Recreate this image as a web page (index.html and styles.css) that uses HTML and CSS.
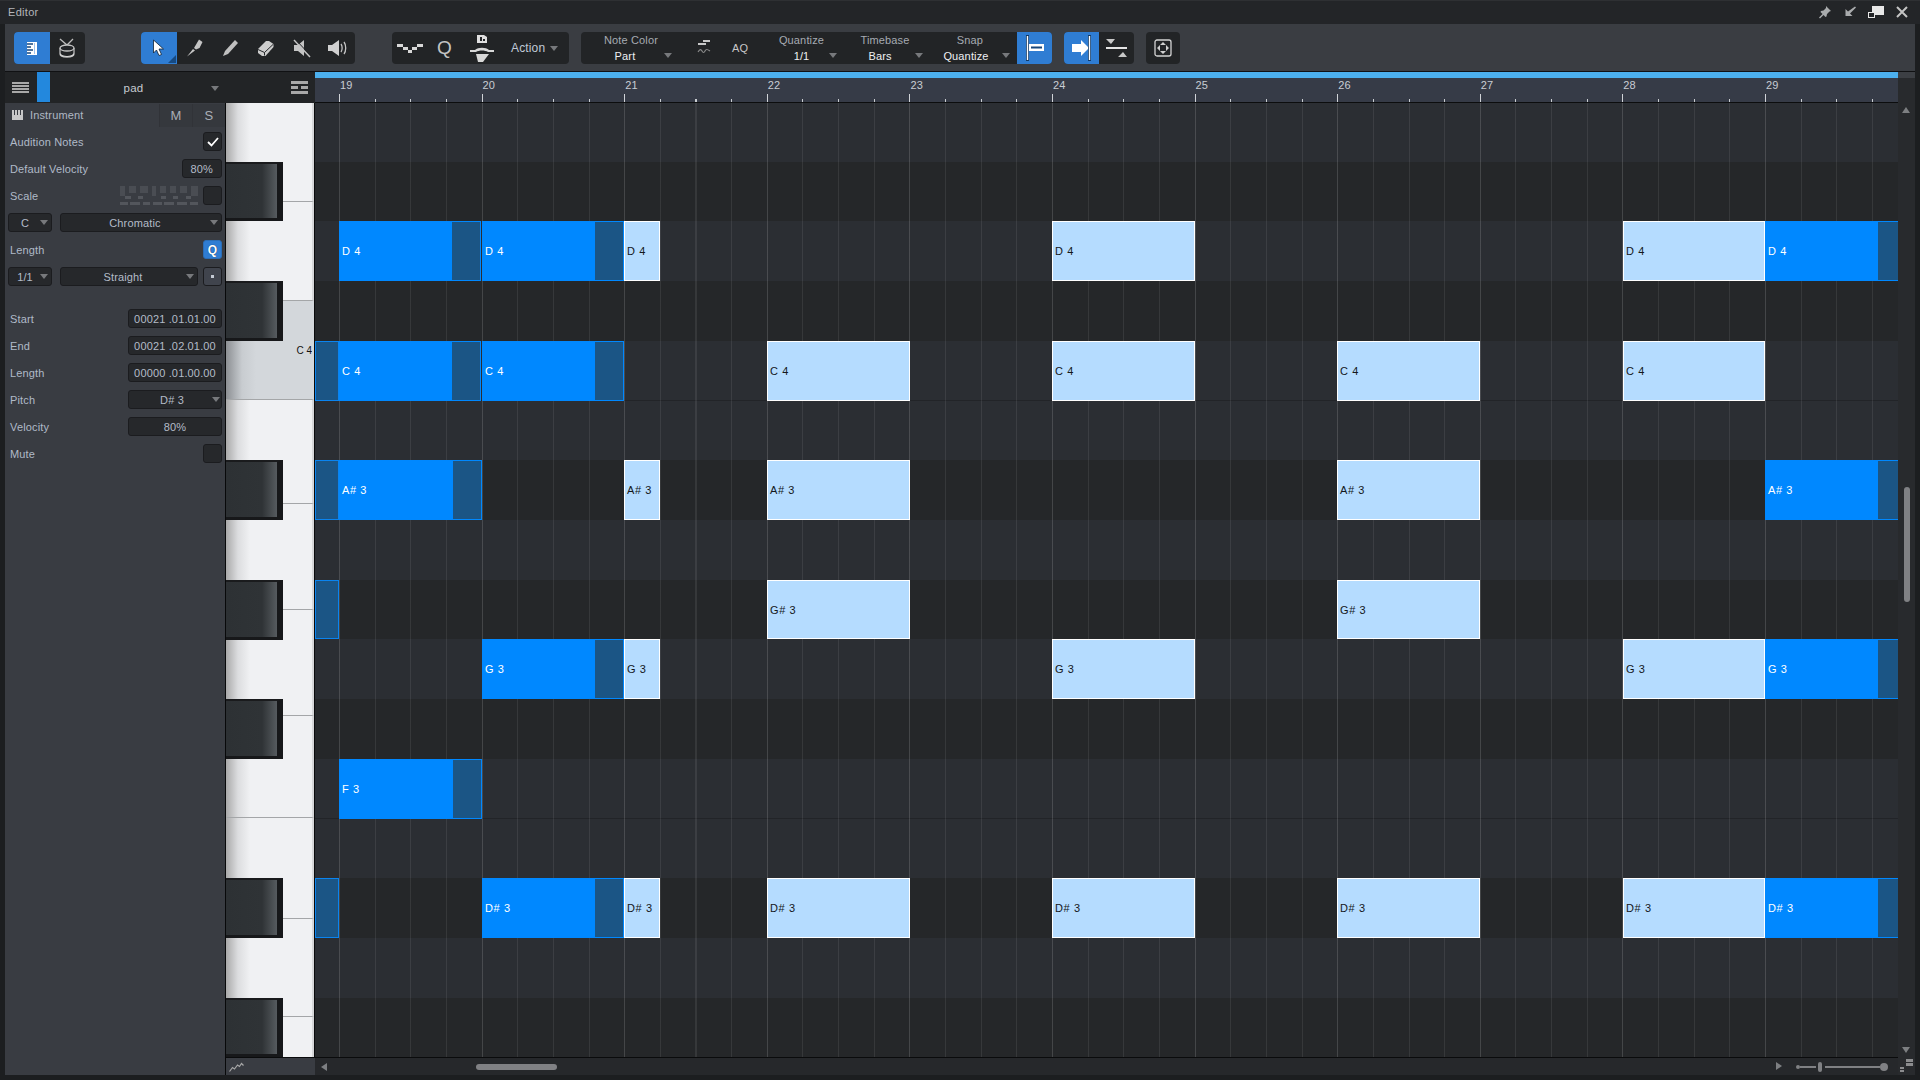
FILE: index.html
```html
<!DOCTYPE html>
<html lang="en">
<head>
<meta charset="utf-8">
<title>Editor</title>
<link rel="stylesheet" href="styles.css">
</head>
<body>
<div class="app">
  <header class="titlebar">
    <span class="title">Editor</span>
    <div class="winbtns">
      <svg class="wi" width="14" height="14" viewBox="0 0 14 14"><path d="M8 1l5 5-1.500.5-2.500 2.500-.5 2.500-1 .5-2-2-3.500 3.500-1-1 3.500-3.500-2-2 .5-1 2.500-.5 2.500-2.500z" fill="#a9abad"/></svg>
      <svg class="wi" width="14" height="14" viewBox="0 0 14 14"><path d="M12 1.500l1 1-6 6 2.500 2.500H2.500V4l2.500 2.500z" fill="#a9abad"/></svg>
      <svg class="wi" width="16" height="14" viewBox="0 0 16 14"><rect x="4" y="1" width="12" height="9" fill="#e8e8e8"/><rect x=".5" y="7.500" width="6" height="5" fill="#232528" stroke="#e8e8e8"/></svg>
      <svg class="wi" width="14" height="14" viewBox="0 0 14 14"><path d="M2 2l10 10M12 2L2 12" stroke="#c4c4c4" stroke-width="2"/></svg>
    </div>
  </header>

  <nav class="toolbar">
    <div class="group g1">
      <button class="tb on"><svg width="10" height="13" viewBox="0 0 10 13"><rect x="0" y="0" width="10" height="13" fill="#fff"/><path d="M0 2h6M0 5h4M0 8h6M0 11h4" stroke="#17477c" stroke-width="1.300"/><path d="M7.500 1v11" stroke="#9fc4ee"/></svg></button>
      <button class="tb"><svg width="18" height="20" viewBox="0 0 18 20"><path d="M2 1l7 6 6-6" fill="none" stroke="#bdbdbd" stroke-width="1.300"/><ellipse cx="9" cy="10" rx="7" ry="3" fill="#232528" stroke="#c4c4c4" stroke-width="1.300"/><path d="M2 10v6c0 2 3 3 7 3s7-1 7-3v-6" fill="none" stroke="#bdbdbd" stroke-width="1.300"/><path d="M2 15c1 2 4 3 7 3s6-1 7-3v2c-1 1-4 2-7 2s-6-1-7-2z" fill="#d8d8d8"/></svg></button>
    </div>
    <div class="group g2">
      <button class="tb on tb-corner"><svg width="14" height="18" viewBox="0 0 14 18"><path d="M1.500 1v13l3-3 2.500 5.500 2.500-1-2.500-5.500h4.500z" fill="#fff" stroke="#123" stroke-width=".8"/></svg></button>
      <button class="tb"><svg width="17" height="18" viewBox="0 0 17 18"><path d="M13 .5l3.500 2.500-3 6-3.500 1.500-2-1.500zM7 10l2 1.500L1 17.500z" fill="#c4c4c4"/></svg></button>
      <button class="tb"><svg width="17" height="18" viewBox="0 0 17 18"><path d="M13 1l3 3-10 11-5 2 2-5z" fill="#c0c0c0"/></svg></button>
      <button class="tb"><svg width="17" height="17" viewBox="0 0 17 17"><path d="M1 9l8-8h3l4.500 3v3l-8 9H5l-4-3z" fill="#cdcdcd"/><path d="M1 9.500l6.500 3 9-8.500M7.500 12.500v3" stroke="#232528" fill="none"/></svg></button>
      <button class="tb"><svg width="18" height="19" viewBox="0 0 18 19"><path d="M1 6h4l6-5v16l-6-5H1z" fill="#c4c4c4"/><path d="M1 1l16 17" stroke="#c4c4c4" stroke-width="1.500"/><path d="M2.500 .5l16 17" stroke="#232528"/></svg></button>
      <button class="tb"><svg width="20" height="18" viewBox="0 0 20 18"><path d="M1 6h4l7-5v16l-7-5H1z" fill="#d0d0d0"/><path d="M14 5c1.500 2 1.500 6 0 8M17 3c2.300 3 2.300 9 0 12" fill="none" stroke="#c4c4c4" stroke-width="1.300"/></svg></button>
    </div>
    <div class="group g3">
      <button class="tb w36"><svg width="26" height="9" viewBox="0 0 26 9"><path d="M0 0h6v3H0zM6 3h5v3H6zM11 6h4v3h-4zM15 3h5v3h-5zM20 0h6v3h-6z" fill="#d8d8d8"/></svg></button>
      <button class="tb w35 q">Q</button>
      <button class="tb w38"><svg width="24" height="27" viewBox="0 0 24 27"><path d="M7 0h7l3 2v6H7z" fill="#e0e0e0"/><path d="M10 2h2v4h-2zM13 4h2v2h-2z" fill="#232528"/><path d="M0 15h5c3-3 11-3 14 0h5v2h-6c-3-2-9-2-12 0H0z" fill="#d8d8d8"/><path d="M6 19h13l-6 8H8z" fill="#d8d8d8"/></svg></button>
      <div class="action"><span>Action</span><i class="tri"></i></div>
    </div>
    <div class="group g4">
      <div class="combo c-color"><span class="lb">Note Color</span><span class="val">Part</span><i class="tri"></i></div>
      <button class="tb w36 ml5"><svg width="14" height="16" viewBox="0 0 14 16"><path d="M6 0h7v2H6zM1 3h8v2H1z" fill="#c8c8c8"/><path d="M1 12c2-3 3-3 4-1s2 2 3 0 2-2 5 0" fill="none" stroke="#8a8a8a" stroke-width="1.200"/></svg></button>
      <button class="tb w36 aq">AQ</button>
      <div class="combo c-quant"><span class="lb">Quantize</span><span class="val">1/1</span><i class="tri"></i></div>
      <div class="combo c-base"><span class="lb">Timebase</span><span class="val">Bars</span><i class="tri"></i></div>
      <div class="combo c-snap"><span class="lb">Snap</span><span class="val">Quantize</span><i class="tri"></i></div>
      <button class="tb on"><svg width="19" height="26" viewBox="0 0 19 26"><rect x="1" y="0" width="3" height="26" fill="#123a66"/><rect x="1.800" y="1" width="1.400" height="24" fill="#fff"/><rect x="4" y="9" width="15" height="7" fill="#fff"/><rect x="6" y="11.500" width="11" height="2" fill="#17477c"/></svg></button>
    </div>
    <div class="group g5">
      <button class="tb on"><svg width="20" height="26" viewBox="0 0 20 26"><path d="M0 9h9V5l8 8-8 8v-4H0z" fill="#fff"/><rect x="16" y="0" width="3" height="26" fill="#123a66"/><rect x="16.800" y="1" width="1.400" height="24" fill="#fff"/></svg></button>
      <button class="tb"><svg width="22" height="24" viewBox="0 0 22 24"><path d="M0 3h9L5 8zM12 21h9l-4-5z" fill="#c8c8c8"/><rect y="11" width="21" height="2" fill="#e4e4e4"/></svg></button>
    </div>
    <div class="group g6">
      <button class="tb"><svg width="18" height="18" viewBox="0 0 18 18"><rect x="1" y="1" width="16" height="16" rx="2" fill="none" stroke="#d4d4d4" stroke-width="1.300"/><path d="M9 3l3 3H6zM9 15l3-3H6zM3 9l3-3v6zM15 9l-3-3v6z" fill="#d0d0d0"/><circle cx="9" cy="9" r="2" fill="#232528"/></svg></button>
    </div>
  </nav>

  <main class="editor">
    <div class="strip">
      <svg class="strip-ic" width="17" height="12" viewBox="0 0 17 12"><path d="M0 1h17M0 4h17M0 7h17M0 10h17" stroke="#a8a8a8" stroke-width="1.800"/></svg>
      <span class="swatch"></span>
      <div class="trackname"><span>pad</span><i class="tri"></i></div>
      <svg class="strip-ic" width="17" height="13" viewBox="0 0 17 13"><path d="M0 0h17v3H0zM0 5h7v3H0zM10 5h7v3h-7zM0 10h17v3H0z" fill="#a8a8a8"/></svg>
    </div>

    <div class="ruler">
      <div class="loopband"></div>
      <div class="bars">
        <span>19</span><span>20</span><span>21</span><span>22</span><span>23</span><span>24</span><span>25</span><span>26</span><span>27</span><span>28</span><span>29</span>
      </div>
      <div class="ticks"></div>
    </div>

    <aside class="vscroll">
      <div class="vs-top"></div>
      <i class="arrow-up"></i>
      <span class="vthumb"></span>
      <i class="arrow-down"></i>
      <svg class="corner" width="14" height="14" viewBox="0 0 14 14"><path d="M6 0h7v3H6zM6 4h7v3H6zM0 8h4v2H0zM0 11h4v2H0z" fill="#8b8c8e"/></svg>
    </aside>

    <section class="panel">
      <div class="inst">
        <svg width="11" height="10" viewBox="0 0 11 10"><path d="M0 0h2v5h1V0h2v5h1V0h2v5h1V0h2v10H0z" fill="#c8c8c8"/></svg>
        <span class="inst-name">Instrument</span>
        <span class="ms">M</span><span class="ms">S</span>
      </div>
      <div class="prow"><label>Audition Notes</label><span class="box sq"><svg width="12" height="10" viewBox="0 0 12 10"><path d="M1 5l3.500 3.500L11 1" fill="none" stroke="#fff" stroke-width="1.800"/></svg></span></div>
      <div class="prow"><label>Default Velocity</label><span class="box w40">80%</span></div>
      <div class="prow"><label>Scale</label>
        <svg class="scale" width="78" height="19" viewBox="0 0 78 19"><path d="M0 0h5v10H0zM9 0h7v7H9zM20 0h8v7h-8zM32 0h4v10h-4zM40 0h6v7h-6zM50 0h6v7h-6zM60 0h7v7h-7zM71 0h7v10h-7z" fill="#4a4d53"/><path d="M0 16h8v3H0zM10 16h10v3H10zM23 16h7v3h-7zM33 16h9v3h-9zM44 16h10v3H44zM57 16h10v3H57zM70 16h8v3h-8z" fill="#53565c"/><path d="M5 10h6v3H5zM18 10h5v3h-5zM41 10h5v3h-5zM53 10h5v3h-5zM66 10h5v3h-5z" fill="#53565c"/></svg>
        <span class="box sq"></span></div>
      <div class="prow tight"><span class="box dd w44 t-c"><b>C</b><i class="tri"></i></span><span class="box dd grow"><b>Chromatic</b><i class="tri"></i></span></div>
      <div class="prow"><label>Length</label><span class="box sq blue"><span class="qs">Q</span></span></div>
      <div class="prow tight"><span class="box dd w44 t-c"><b>1/1</b><i class="tri"></i></span><span class="box dd grow"><b>Straight</b><i class="tri"></i></span><span class="box sq soft"><span class="dot"></span></span></div>
      <div class="prow sep"><label>Start</label><span class="box w94">00021 .01.01.00</span></div>
      <div class="prow"><label>End</label><span class="box w94">00021 .02.01.00</span></div>
      <div class="prow"><label>Length</label><span class="box w94">00000 .01.00.00</span></div>
      <div class="prow"><label>Pitch</label><span class="box dd w94"><b>D# 3</b><i class="tri"></i></span></div>
      <div class="prow"><label>Velocity</label><span class="box w94">80%</span></div>
      <div class="prow"><label>Mute</label><span class="box sq"></span></div>
    </section>

    <div class="keys">
      <div class="wk"></div>
      <div class="wk"></div>
      <div class="wk sel"><span>C 4</span></div>
      <div class="wk"></div>
      <div class="wk"></div>
      <div class="wk"></div>
      <div class="wk"></div>
      <div class="wk"></div>
      <div class="wk"></div>
      <div class="wk last"></div>
      <div class="bk bk1"></div><div class="bk bk2"></div><div class="bk bk3"></div><div class="bk bk4"></div><div class="bk bk5"></div><div class="bk bk6"></div><div class="bk bk7"></div>
    </div>

    <div class="roll">
      <div class="lane"></div>
      <div class="lane dark"></div>
      <div class="lane">
        <div class="note blue" style="left:24px;width:142px"><span>D 4</span><i></i></div>
        <div class="note blue" style="left:167px;width:142px"><span>D 4</span><i></i></div>
        <div class="note light" style="left:309px;width:36px"><span>D 4</span></div>
        <div class="note light" style="left:737px;width:143px"><span>D 4</span></div>
        <div class="note light" style="left:1308px;width:142px"><span>D 4</span></div>
        <div class="note blue cut" style="left:1450px;width:135px"><span>D 4</span><i></i></div>
      </div>
      <div class="lane dark"></div>
      <div class="lane rule">
        <div class="note stub" style="left:0;width:24px"></div>
        <div class="note blue" style="left:24px;width:142px"><span>C 4</span><i></i></div>
        <div class="note blue" style="left:167px;width:142px"><span>C 4</span><i></i></div>
        <div class="note light" style="left:452px;width:143px"><span>C 4</span></div>
        <div class="note light" style="left:737px;width:143px"><span>C 4</span></div>
        <div class="note light" style="left:1022px;width:143px"><span>C 4</span></div>
        <div class="note light" style="left:1308px;width:142px"><span>C 4</span></div>
      </div>
      <div class="lane"></div>
      <div class="lane dark">
        <div class="note stub" style="left:0;width:24px"></div>
        <div class="note blue" style="left:24px;width:143px"><span>A# 3</span><i></i></div>
        <div class="note light" style="left:309px;width:36px"><span>A# 3</span></div>
        <div class="note light" style="left:452px;width:143px"><span>A# 3</span></div>
        <div class="note light" style="left:1022px;width:143px"><span>A# 3</span></div>
        <div class="note blue cut" style="left:1450px;width:135px"><span>A# 3</span><i></i></div>
      </div>
      <div class="lane"></div>
      <div class="lane dark">
        <div class="note stub" style="left:0;width:24px"></div>
        <div class="note light" style="left:452px;width:143px"><span>G# 3</span></div>
        <div class="note light" style="left:1022px;width:143px"><span>G# 3</span></div>
      </div>
      <div class="lane">
        <div class="note blue" style="left:167px;width:142px"><span>G 3</span><i></i></div>
        <div class="note light" style="left:309px;width:36px"><span>G 3</span></div>
        <div class="note light" style="left:737px;width:143px"><span>G 3</span></div>
        <div class="note light" style="left:1308px;width:142px"><span>G 3</span></div>
        <div class="note blue cut" style="left:1450px;width:135px"><span>G 3</span><i></i></div>
      </div>
      <div class="lane dark"></div>
      <div class="lane rule">
        <div class="note blue" style="left:24px;width:143px"><span>F 3</span><i></i></div>
      </div>
      <div class="lane"></div>
      <div class="lane dark">
        <div class="note stub" style="left:0;width:24px"></div>
        <div class="note blue" style="left:167px;width:142px"><span>D# 3</span><i></i></div>
        <div class="note light" style="left:309px;width:36px"><span>D# 3</span></div>
        <div class="note light" style="left:452px;width:143px"><span>D# 3</span></div>
        <div class="note light" style="left:737px;width:143px"><span>D# 3</span></div>
        <div class="note light" style="left:1022px;width:143px"><span>D# 3</span></div>
        <div class="note light" style="left:1308px;width:142px"><span>D# 3</span></div>
        <div class="note blue cut" style="left:1450px;width:135px"><span>D# 3</span><i></i></div>
      </div>
      <div class="lane"></div>
      <div class="lane dark"></div>
      <div class="gridlines"></div>
    </div>

    <div class="keyfoot"><svg width="15" height="10" viewBox="0 0 15 10"><path d="M.5 9.500l3-4 2 1.500 3-4 2 1.500 2-3 2 2" fill="none" stroke="#a8a8a8" stroke-width="1.200"/></svg></div>

    <div class="hscroll">
      <i class="arrow-left"></i>
      <span class="hthumb"></span>
      <i class="arrow-right"></i>
      <div class="zoomer"><span class="z-start"></span><span class="z-line"></span><span class="z-knob"></span><span class="z-line long"></span><span class="z-end"></span></div>
    </div>
  </main>
</div>
</body>
</html>
```
FILE: styles.css
```css
* { box-sizing: border-box; }
html, body { margin: 0; height: 100%; }
body {
  width: 1920px; height: 1080px; overflow: hidden;
  background: #1c1e20;
  font-family: "Liberation Sans", Arial, sans-serif;
  font-size: 11px; letter-spacing: .15px; color: #b4bcc8;
}
.app { display: flex; flex-direction: column; height: 1075px; }

/* title bar */
.titlebar {
  height: 24px; flex: none; display: flex; align-items: center; justify-content: space-between;
  background: #232528; border-top: 1px solid #2e3033; padding: 0 11px 2px 8px;
}
.title { color: #b4b6ba; font-size: 11px; letter-spacing: .3px; }
.winbtns { display: flex; align-items: center; gap: 11px; }
.wi { display: block; }

/* toolbar */
.toolbar {
  height: 48px; flex: none; margin: 0 5px; padding: 8px 0 0 9px;
  display: flex; align-items: flex-start;
  background: #3a3d42; border-bottom: 1px solid #101113;
}
.group { height: 32px; display: flex; background: #222426; border-radius: 4px; overflow: hidden; flex: none; }
.g1 { width: 71px; }
.g2 { width: 214px; margin-left: 56px; }
.g3 { width: 177px; margin-left: 37px; }
.g4 { width: 471px; margin-left: 12px; }
.g5 { width: 70px; margin-left: 12px; }
.g6 { width: 34px; margin-left: 12px; }
.tb {
  flex: 1 1 0; height: 32px; min-width: 0; padding: 0; border: 0; background: transparent;
  display: flex; align-items: center; justify-content: center; position: relative;
  font-family: inherit; color: #c8c8c8;
}
.tb.on { background: #2f7dd3; }
.g4 .tb.on { flex: 0 0 35px; }
.tb-corner::after {
  content: ""; position: absolute; right: 1px; bottom: 1px;
  border-style: solid; border-width: 0 0 8px 8px; border-color: transparent transparent #174a82 transparent;
}
.w35 { flex: 0 0 35px; } .w36 { flex: 0 0 36px; } .w38 { flex: 0 0 38px; }
.q { font-size: 19px; color: #c4c4c4; padding-right: 2px; }
.aq { font-size: 11px; }
.ml5 { margin-left: 5px; }
.tri {
  display: block; width: 0; height: 0;
  border-style: solid; border-width: 5px 4px 0 4px; border-color: #77797c transparent transparent transparent;
}
.action { flex: 1; display: flex; align-items: center; gap: 5px; padding-left: 10px; font-size: 12px; color: #c0c9d6; }
.combo { position: relative; display: flex; flex-direction: column; align-items: center; height: 32px; flex: none; }
.combo .lb { height: 16px; line-height: 16px; color: #a6abb2; font-size: 11px; }
.combo .val { height: 16px; line-height: 16px; color: #eef0f2; font-size: 11px; }
.combo .tri { position: absolute; top: 21px; }
.c-color { width: 100px; }
.c-color .val { padding-right: 12px; }
.c-color .tri { left: 83px; }
.c-quant { width: 75px; margin-left: 6px; }
.c-quant .tri { right: 2px; }
.c-base { width: 80px; margin-left: 6px; }
.c-base .val { padding-right: 10px; }
.c-base .tri { right: 2px; }
.c-snap { width: 80px; margin-left: 5px; margin-right: 7px; }
.c-snap .val { padding-right: 8px; }
.c-snap .tri { right: 0; }

/* editor grid */
.editor {
  flex: 1; min-height: 0; margin: 0 5px;
  display: grid;
  grid-template-columns: 221px 89px 1583px 17px;
  grid-template-rows: 31px 954px 18px;
}
.strip {
  grid-column: 1 / 3; grid-row: 1;
  display: flex; align-items: center; background: #222426; padding-left: 7px; padding-right: 7px;
}
.strip-ic { flex: none; }
.swatch { width: 13px; height: 30px; margin-left: 8px; background: #2388dd; align-self: flex-start; }
.trackname { flex: 1; position: relative; display: flex; justify-content: center; padding-right: 74px; color: #c8ccd2; font-size: 11.500px; letter-spacing: .3px; }
.trackname .tri { position: absolute; right: 72px; top: 4px; }

.ruler { grid-column: 3; grid-row: 1; position: relative; background: #363b47; border-bottom: 1px solid #0c0d0e; }
.loopband { height: 6px; background: #4cb0ee; }
.bars { display: flex; padding-left: 25px; height: 14px; overflow: hidden; }
.bars span { flex: 0 0 142.6px; line-height: 14px; font-size: 11px; color: #c8cdd4; }
.ticks {
  position: absolute; left: 24px; right: 0; bottom: 0; height: 8px;
  background:
    repeating-linear-gradient(90deg, #d0d3d8 0 1px, transparent 1px 142.6px),
    linear-gradient(#363b47 0 5px, transparent 5px),
    repeating-linear-gradient(90deg, #c8ccd0 0 1px, transparent 1px 35.65px);
}

.vscroll { grid-column: 4; grid-row: 1 / 4; position: relative; background: #282a2d; }
.vs-top { height: 6px; background: #3c3f44; }
.arrow-up, .arrow-down { position: absolute; left: 4px; border-style: solid; border-color: transparent; }
.arrow-up { top: 35px; border-width: 0 4.500px 6px 4.500px; border-bottom-color: #7d7f82; }
.arrow-down { top: 975px; border-width: 6px 4.500px 0 4.500px; border-top-color: #7d7f82; }
.vthumb { position: absolute; left: 6px; top: 415px; width: 6px; height: 115px; background: #808184; border-radius: 3px; }
.corner { position: absolute; left: 2px; bottom: 2px; }

/* panel */
.panel { grid-column: 1; grid-row: 2 / 4; background: #393c42; border-right: 1px solid #08090a; padding-right: 3px; }
.inst { height: 24px; margin-right: -3px; display: flex; align-items: center; padding-left: 7px; margin-bottom: 1px; }
.inst-name { margin-left: 7px; flex: 1; color: #b0b8c4; font-size: 11px; }
.ms { width: 33px; height: 23px; display: flex; align-items: center; justify-content: center; background: #35383d; border-left: 1px solid #313338; font-size: 13px; color: #a9aeb6; }
.prow { height: 27px; display: flex; align-items: center; justify-content: space-between; padding-left: 3px; gap: 8px; }
.prow label { margin-left: 2px; color: #b0bac8; flex: 1; }
.prow.tight { gap: 0; }
.prow.sep { margin-top: 15px; }
.box {
  height: 19px; flex: none; display: flex; align-items: center; justify-content: center; position: relative;
  background: #26282b; border: 1px solid #1b1c1f; border-radius: 3px; color: #b4bcc8;
  font-size: 11px; white-space: pre;
}
.sq { width: 19px; }
.w40 { width: 40px; justify-content: flex-end; padding-right: 8px; }
.w44 { width: 44px; margin-right: 8px; }
.w94 { width: 94px; }
.grow { flex: 1; }
.blue { background: #2f7dd3; border-color: #2b6db5; }
.soft { background: #40444d; margin-left: 5px; }
.dot { width: 3px; height: 3px; background: #c4cad4; }
.qs { font-size: 12px; color: #fff; font-weight: bold; text-shadow: 0 0 1px #0d2c50; }
.scale { flex: none; margin-right: -3px; }
.dd b { font-weight: normal; padding-right: 12px; }
.dd .tri { position: absolute; right: 3px; top: 6px; }
.t-c b { padding-right: 10px; }
.w94.dd b { padding-right: 6px; }
.w94.dd .tri { right: 1px; }

/* keyboard */
.keys {
  grid-column: 2; grid-row: 2; position: relative; overflow: hidden;
  display: grid; grid-template-rows: 99px 99px 99px 104px 106px 106px 102px 101px 98px 40px;
  border-right: 1px solid #0a0b0c;
}
.wk {
  background: linear-gradient(90deg, #a9a9a9 0, #dcdddf 12px, #f0f1f3 24px);
  border-right: 2px solid #d6d7d9; border-bottom: 1px solid #a4a6a8;
}
.wk.last { border-bottom: 0; }
.wk.sel {
  display: flex; align-items: center; justify-content: flex-end;
  background: linear-gradient(90deg, #8c8f93 0, #c8ccd0 16px, #d3d7db 30px);
  border-right-color: #d3d7db; color: #111; font-size: 10px; letter-spacing: 0; overflow: hidden;
}
.bk {
  position: absolute; left: 0; width: 57px; height: 60px;
  background: linear-gradient(90deg, #2d3134 0, #2f3336 36px, #565b5f 51px);
  border-top: 2px solid #1a1b1d; border-bottom: 3px solid #17181a; border-right: 6px solid #17181a;
}
.bk1 { top: 59px; height: 59px; }
.bk2 { top: 178px; }
.bk3 { top: 357px; }
.bk4 { top: 477px; }
.bk5 { top: 596px; }
.bk6 { top: 775px; }
.bk7 { top: 895px; height: 59px; }

/* piano roll */
.roll {
  grid-column: 3; grid-row: 2; position: relative; overflow: hidden;
  display: grid; grid-template-rows: 59px 59px 60px 60px 60px 59px 60px 60px 59px 60px 60px 60px 59px 60px 60px 59px;
  background: #2b2e33;
}
.lane { position: relative; background: #2b2e33; }
.lane.dark { background: #252729; }
.lane.rule { box-shadow: inset 0 -1px 0 #222428; }
.gridlines {
  position: absolute; top: 0; bottom: 0; left: 24px; right: 0; z-index: 1;
  background:
    repeating-linear-gradient(90deg, rgba(255,255,255,.07) 0 1px, transparent 1px 142.6px),
    repeating-linear-gradient(90deg, rgba(255,255,255,.08) 0 1px, transparent 1px 35.65px);
}
.note {
  position: absolute; top: 0; bottom: 0; z-index: 2; display: flex; align-items: center;
  font-size: 11px; letter-spacing: .6px;
}
.note span { flex: 1; padding-left: 3px; white-space: nowrap; overflow: hidden; }
.note.blue { background: #0088ff; color: #fff; padding: 1px; }
.note.blue span { padding-left: 2px; }
.note.blue i { flex: 0 0 28px; align-self: stretch; background: #1b5585; }
.note.blue.cut i { flex-basis: 21px; }
.note.light { background: #b5dcff; border: 1px solid #fff; color: #14171a; }
.note.light span { padding-left: 2px; }
.note.stub { background: #1b5585; border: 1px solid #0a84f0; }

.keyfoot { grid-column: 2; grid-row: 3; background: #393c42; padding: 4px 0 0 3px; border-top: 1px solid #0a0b0c; }
.keyfoot svg { display: block; }
.hscroll { grid-column: 3; grid-row: 3; position: relative; background: #26282b; border-top: 1px solid #0a0b0c; display: flex; align-items: center; }
.arrow-left { margin-left: 6px; border-style: solid; border-width: 4.500px 6px 4.500px 0; border-color: transparent #7d7f82 transparent transparent; }
.arrow-right { position: absolute; left: 1461px; top: 4px; border-style: solid; border-width: 4.500px 0 4.500px 6px; border-color: transparent transparent transparent #7d7f82; }
.hthumb { width: 81px; height: 6px; margin-left: 149px; background: #808184; border-radius: 3px; }
.zoomer { position: absolute; left: 1481px; top: 3px; width: 92px; height: 12px; display: flex; align-items: center; }
.z-start { width: 4px; height: 4px; border-radius: 50%; background: #808184; }
.z-line { flex: 0 0 16px; height: 2px; background: #808184; }
.z-line.long { flex: 1; margin-left: 3px; }
.z-knob { width: 4px; height: 10px; margin-left: 2px; background: #808184; border-radius: 2px; }
.z-end { width: 8px; height: 8px; border-radius: 50%; background: #808184; }
```
